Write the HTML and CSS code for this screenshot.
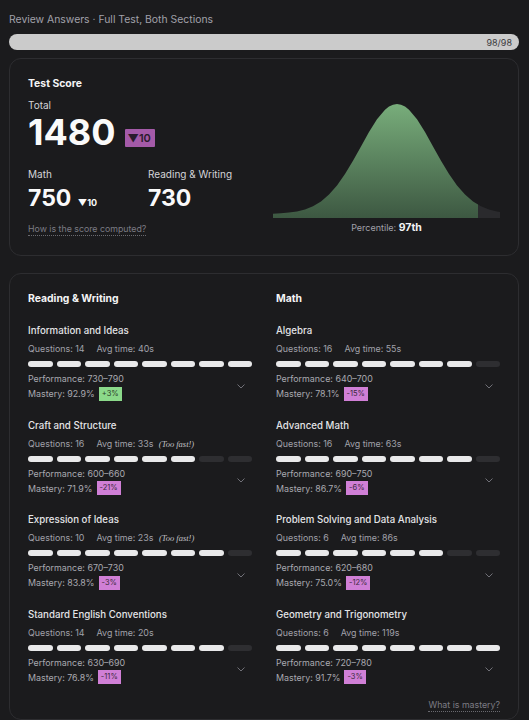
FILE: index.html
```html
<!DOCTYPE html>
<html lang="en">
  <head>
    <meta charset="UTF-8" />
    <meta name="viewport" content="width=device-width, initial-scale=1.0" />
    <title>Review Answers</title>
    <link rel="stylesheet" href="styles.css">
  </head>
  <body>
    <div class="page">
      <div class="crumb">Review Answers · Full Test, Both Sections</div>
      <div class="progress"><span>98/98</span></div>

      <!-- score summary -->
      <section class="card score-card">
        <div class="score-left">
          <h2 class="card-title">Test Score</h2>
          <div class="label total-label">Total</div>
          <div class="total-row">
            <span class="total">1480</span>
            <span class="delta-badge">▼10</span>
          </div>
          <div class="sub-scores">
            <div class="sub">
              <div class="label">Math</div>
              <div class="sub-value">750 <span class="delta-small">▼10</span></div>
            </div>
            <div class="sub">
              <div class="label">Reading &amp; Writing</div>
              <div class="sub-value">730</div>
            </div>
          </div>
          <a class="help-link" href="#">How is the score computed?</a>
        </div>
        <div class="score-right">
          <svg class="bell" width="227" height="115" viewBox="0 0 227 115">
            <defs>
              <linearGradient id="bellFill" x1="0" y1="0" x2="0" y2="1">
                <stop offset="0" stop-color="#78ad7b" />
                <stop offset="1" stop-color="#3d5842" />
              </linearGradient>
            </defs>
            <path fill="url(#bellFill)" d="M0,115 L0,110.7 L8,110.3 L16,109.6 L24,108.4 L32,106.4 L40,103.2 L48,98.4 L56,91.6 L64,82.5 L72,71.1 L80,57.8 L88,43.4 L96,29 L104,16.3 L112,6.8 L116,3.6 L120,1.7 L124,1 L128,1.7 L132,3.6 L136,6.8 L144,16.3 L152,29 L160,43.4 L168,57.8 L176,71.1 L184,82.5 L192,91.6 L200,98.4 L205,101.6 L205,115 Z" />
            <path fill="#2a2a2d" d="M205,115 L205,101.6 L208,103.2 L216,106.4 L224,108.4 L227,108.9 L227,115 Z" />
          </svg>
          <div class="percentile">Percentile: <b>97th</b></div>
        </div>
      </section>

      <!-- domains -->
      <section class="card domain-card">
        <div class="domain-grid">
          <div class="domain-col">
            <h2 class="card-title">Reading &amp; Writing</h2>

            <div class="skill">
              <div class="skill-name">Information and Ideas</div>
              <div class="skill-meta"><span>Questions: 14</span><span>Avg time: 40s</span></div>
              <div class="bars">
                <i class="on"></i><i class="on"></i><i class="on"></i><i class="on"></i><i class="on"></i><i class="on"></i><i class="on"></i><i class="on"></i>
              </div>
              <div class="skill-foot">
                <div>
                  <div class="perf">Performance: 730–790</div>
                  <div class="mastery">Mastery: 92.9% <span class="tag up">+3%</span></div>
                </div>
                <svg class="chev" width="8" height="5" viewBox="0 0 8 5"><polyline points="0.5,0.5 4,4 7.5,0.5" /></svg>
              </div>
            </div>

            <div class="skill">
              <div class="skill-name">Craft and Structure</div>
              <div class="skill-meta"><span>Questions: 16</span><span>Avg time: 33s <em class="fast">(Too fast!)</em></span></div>
              <div class="bars">
                <i class="on"></i><i class="on"></i><i class="on"></i><i class="on"></i><i class="on"></i><i class="on"></i><i></i><i></i>
              </div>
              <div class="skill-foot">
                <div>
                  <div class="perf">Performance: 600–660</div>
                  <div class="mastery">Mastery: 71.9% <span class="tag down">-21%</span></div>
                </div>
                <svg class="chev" width="8" height="5" viewBox="0 0 8 5"><polyline points="0.5,0.5 4,4 7.5,0.5" /></svg>
              </div>
            </div>

            <div class="skill">
              <div class="skill-name">Expression of Ideas</div>
              <div class="skill-meta"><span>Questions: 10</span><span>Avg time: 23s <em class="fast">(Too fast!)</em></span></div>
              <div class="bars">
                <i class="on"></i><i class="on"></i><i class="on"></i><i class="on"></i><i class="on"></i><i class="on"></i><i class="on"></i><i></i>
              </div>
              <div class="skill-foot">
                <div>
                  <div class="perf">Performance: 670–730</div>
                  <div class="mastery">Mastery: 83.8% <span class="tag down">-3%</span></div>
                </div>
                <svg class="chev" width="8" height="5" viewBox="0 0 8 5"><polyline points="0.5,0.5 4,4 7.5,0.5" /></svg>
              </div>
            </div>

            <div class="skill">
              <div class="skill-name">Standard English Conventions</div>
              <div class="skill-meta"><span>Questions: 14</span><span>Avg time: 20s</span></div>
              <div class="bars">
                <i class="on"></i><i class="on"></i><i class="on"></i><i class="on"></i><i class="on"></i><i class="on"></i><i class="on"></i><i></i>
              </div>
              <div class="skill-foot">
                <div>
                  <div class="perf">Performance: 630–690</div>
                  <div class="mastery">Mastery: 76.8% <span class="tag down">-11%</span></div>
                </div>
                <svg class="chev" width="8" height="5" viewBox="0 0 8 5"><polyline points="0.5,0.5 4,4 7.5,0.5" /></svg>
              </div>
            </div>
          </div>

          <div class="domain-col">
            <h2 class="card-title">Math</h2>

            <div class="skill">
              <div class="skill-name">Algebra</div>
              <div class="skill-meta"><span>Questions: 16</span><span>Avg time: 55s</span></div>
              <div class="bars">
                <i class="on"></i><i class="on"></i><i class="on"></i><i class="on"></i><i class="on"></i><i class="on"></i><i class="on"></i><i></i>
              </div>
              <div class="skill-foot">
                <div>
                  <div class="perf">Performance: 640–700</div>
                  <div class="mastery">Mastery: 78.1% <span class="tag down">-15%</span></div>
                </div>
                <svg class="chev" width="8" height="5" viewBox="0 0 8 5"><polyline points="0.5,0.5 4,4 7.5,0.5" /></svg>
              </div>
            </div>

            <div class="skill">
              <div class="skill-name">Advanced Math</div>
              <div class="skill-meta"><span>Questions: 16</span><span>Avg time: 63s</span></div>
              <div class="bars">
                <i class="on"></i><i class="on"></i><i class="on"></i><i class="on"></i><i class="on"></i><i class="on"></i><i class="on"></i><i></i>
              </div>
              <div class="skill-foot">
                <div>
                  <div class="perf">Performance: 690–750</div>
                  <div class="mastery">Mastery: 86.7% <span class="tag down">-6%</span></div>
                </div>
                <svg class="chev" width="8" height="5" viewBox="0 0 8 5"><polyline points="0.5,0.5 4,4 7.5,0.5" /></svg>
              </div>
            </div>

            <div class="skill">
              <div class="skill-name">Problem Solving and Data Analysis</div>
              <div class="skill-meta"><span>Questions: 6</span><span>Avg time: 86s</span></div>
              <div class="bars">
                <i class="on"></i><i class="on"></i><i class="on"></i><i class="on"></i><i class="on"></i><i class="on"></i><i></i><i></i>
              </div>
              <div class="skill-foot">
                <div>
                  <div class="perf">Performance: 620–680</div>
                  <div class="mastery">Mastery: 75.0% <span class="tag down">-12%</span></div>
                </div>
                <svg class="chev" width="8" height="5" viewBox="0 0 8 5"><polyline points="0.5,0.5 4,4 7.5,0.5" /></svg>
              </div>
            </div>

            <div class="skill">
              <div class="skill-name">Geometry and Trigonometry</div>
              <div class="skill-meta"><span>Questions: 6</span><span>Avg time: 119s</span></div>
              <div class="bars">
                <i class="on"></i><i class="on"></i><i class="on"></i><i class="on"></i><i class="on"></i><i class="on"></i><i class="on"></i><i class="on"></i>
              </div>
              <div class="skill-foot">
                <div>
                  <div class="perf">Performance: 720–780</div>
                  <div class="mastery">Mastery: 91.7% <span class="tag down">-3%</span></div>
                </div>
                <svg class="chev" width="8" height="5" viewBox="0 0 8 5"><polyline points="0.5,0.5 4,4 7.5,0.5" /></svg>
              </div>
            </div>
          </div>
        </div>
        <a class="help-link foot-link" href="#">What is mastery?</a>
      </section>
    </div>
  </body>
</html>
```

FILE: styles.css
```css
body {
  margin: 0;
  background: #1b1b1d;
  font-family: "Inter", "Noto Sans", sans-serif;
  color: #e4e4e7;
}

.page {
  padding: 13px 10px 0 9px;
}

.crumb {
  font-size: 10.4px;
  line-height: 14px;
  color: #a1a1aa;
}

.progress {
  margin-top: 7px;
  height: 16px;
  border-radius: 8px;
  background: #cbcbcb;
  display: flex;
  justify-content: flex-end;
  align-items: center;
  padding-right: 7px;
}

.progress span {
  font-size: 9px;
  color: #3a3a3c;
}

.card {
  border: 1px solid #2d2d30;
  border-radius: 12px;
  background: #1b1b1d;
}

.card-title {
  margin: 0;
  font-size: 10.4px;
  line-height: 15px;
  font-weight: 700;
  color: #f4f4f5;
}

.label {
  font-size: 10px;
  line-height: 14px;
  color: #d4d4d8;
}

/* score card */

.score-card {
  margin-top: 8px;
  padding: 17px 18px 19px 18px;
  display: grid;
  grid-template-columns: 1fr 227px;
}

.total-label {
  margin-top: 7px;
}

.total-row {
  display: flex;
  align-items: flex-end;
  gap: 9px;
}

.total {
  font-size: 36px;
  line-height: 40px;
  font-weight: 700;
  color: #fafafa;
}

.delta-badge {
  background: #a45aa8;
  color: #2a1b2c;
  font-size: 11px;
  font-weight: 600;
  line-height: 18px;
  padding: 0 4px 0 3px;
  margin-bottom: 5px;
  border-radius: 1px;
}

.sub-scores {
  display: grid;
  grid-template-columns: 120px 1fr;
  margin-top: 15px;
}

.sub-value {
  margin-top: 4px;
  font-size: 23px;
  line-height: 26px;
  font-weight: 700;
  color: #fafafa;
}

.delta-small {
  font-size: 9px;
  line-height: 0;
  font-weight: 700;
  margin-left: 1px;
}

.help-link {
  display: block;
  width: fit-content;
  font-size: 8.8px;
  line-height: 12px;
  color: #7c7c84;
  text-decoration: none;
  border-bottom: 1px dotted #6a6a70;
}

.score-left .help-link {
  margin-top: 12px;
}

.score-right {
  padding-top: 27px;
  display: flex;
  flex-direction: column;
  align-items: center;
}

.bell {
  display: block;
}

.percentile {
  margin-top: 3px;
  font-size: 9px;
  line-height: 14px;
  color: #a1a1aa;
}

.percentile b {
  font-size: 10.5px;
  line-height: 0;
  color: #f4f4f5;
}

/* domain card */

.domain-card {
  margin-top: 17px;
  padding: 17px 18px 7px 18px;
}

.domain-grid {
  display: grid;
  grid-template-columns: 1fr 1fr;
  column-gap: 24px;
}

.skill {
  margin-top: 16.5px;
}

.domain-col .card-title + .skill {
  margin-top: 17px;
}

.skill-name {
  font-size: 9.7px;
  line-height: 16px;
  font-weight: 500;
  color: #e4e4e7;
}

.skill-meta {
  margin-top: 3px;
  display: flex;
  gap: 12px;
  font-size: 8.9px;
  line-height: 14px;
  color: #a1a1aa;
}

.fast {
  font-family: "Liberation Serif", serif;
  font-size: 8.5px;
  line-height: 0;
  color: #c4c4c8;
  margin-left: 3px;
}

.bars {
  margin-top: 5px;
  display: grid;
  grid-template-columns: repeat(8, 1fr);
  gap: 4px;
}

.bars i {
  height: 6px;
  border-radius: 3px;
  background: #2e2e31;
}

.bars i.on {
  background: #e9e9ea;
}

.skill-foot {
  margin-top: 4px;
  display: flex;
  justify-content: space-between;
  align-items: center;
}

.perf,
.mastery {
  font-size: 8.9px;
  line-height: 15px;
  color: #a9a9b0;
}

.mastery {
  display: flex;
  align-items: center;
  gap: 4px;
}

.tag {
  display: inline-block;
  font-size: 7.5px;
  line-height: 14px;
  padding: 0 3px;
  color: #3b2a3c;
}

.tag.up {
  background: #8bd98a;
  color: #2b3d2b;
}

.tag.down {
  background: #d07fd6;
}

.chev {
  margin-right: 7px;
  fill: none;
  stroke: #707077;
  stroke-width: 1;
}

.foot-link {
  margin: 14px 0 0 auto;
}
```
